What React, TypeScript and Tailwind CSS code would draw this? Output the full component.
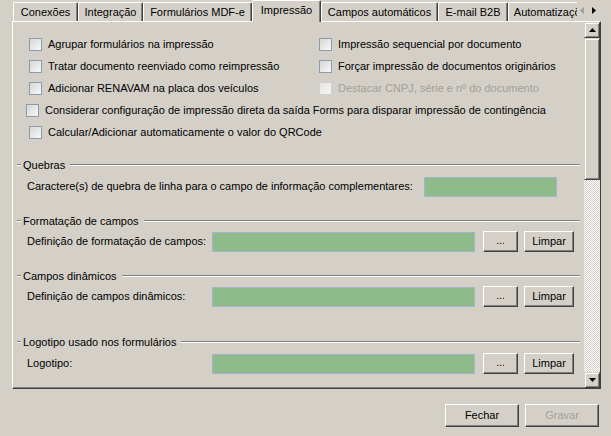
import clsx from "clsx";

type Tab = { label: string; width: string; active?: boolean };

const tabs: Tab[] = [
  { label: "Conexões", width: "w-[65px]" },
  { label: "Integração", width: "w-[65px]" },
  { label: "Formulários MDF-e", width: "w-[109px]" },
  { label: "Impressão", width: "w-[69px]", active: true },
  { label: "Campos automáticos", width: "w-[117px]" },
  { label: "E-mail B2B", width: "w-[70px]" },
  { label: "Automatizações", width: "w-[90px]" },
];

const raised =
  "border border-t-white border-l-white border-r-[#404040] border-b-[#404040] shadow-[inset_-1px_-1px_0_#808080]";

function Checkbox({ disabled }: { disabled?: boolean }) {
  return (
    <span
      className={clsx(
        "h-[13px] w-[13px] shrink-0 border bg-linear-to-br",
        disabled
          ? "border-[#c9cfd8] from-[#e6e5e1] to-[#f6f6f4]"
          : "border-[#8a9bb2] from-[#d6d6d4] to-[#f8f8f8]"
      )}
    />
  );
}

function Option({
  label,
  disabled,
  className,
}: {
  label: string;
  disabled?: boolean;
  className?: string;
}) {
  return (
    <div className={clsx("flex h-[22px] items-center gap-[6px]", className)}>
      <Checkbox disabled={disabled} />
      <span
        className={clsx(
          "whitespace-nowrap",
          disabled ? "text-[#a19f9a]" : "text-black"
        )}
      >
        {label}
      </span>
    </div>
  );
}

function SectionTitle({
  children,
  className,
}: {
  children: string;
  className?: string;
}) {
  return (
    <div className={clsx("flex h-[14px] items-center pl-[4px] pr-[4px]", className)}>
      <span className="h-[2px] w-[4px] border-t border-t-[#808080] border-b border-b-white" />
      <span className="ml-[2px] mr-[5px] whitespace-nowrap">{children}</span>
      <span className="h-[2px] flex-1 border-t border-t-[#808080] border-b border-b-white" />
    </div>
  );
}

function Button({
  children,
  className,
  disabled,
}: {
  children: string;
  className?: string;
  disabled?: boolean;
}) {
  return (
    <button
      className={clsx(
        "flex items-center justify-center bg-[#d4d0c8]",
        raised,
        disabled ? "text-[#a19f9a]" : "text-black",
        className
      )}
    >
      {children}
    </button>
  );
}

function FieldRow({ label, className }: { label: string; className?: string }) {
  return (
    <div className={clsx("flex h-[21px] items-center pl-[14px]", className)}>
      <span className="w-[185px] whitespace-nowrap">{label}</span>
      <span className="h-[20px] w-[263px] border border-[#a3b6c9] bg-[#8fbb8b]" />
      <Button className="ml-[8px] h-[21px] w-[35px] pb-[3px] text-[10px]">...</Button>
      <Button className="ml-[6px] h-[21px] w-[50px]">Limpar</Button>
    </div>
  );
}

function ScrollButton({ up }: { up?: boolean }) {
  return (
    <div className="flex h-[16px] items-center justify-center border border-t-[#d4d0c8] border-l-[#d4d0c8] border-r-[#404040] border-b-[#404040] shadow-[inset_1px_1px_0_#fff,inset_-1px_-1px_0_#808080]">
      <svg width="7" height="4" viewBox="0 0 7 4">
        {up ? (
          <polygon points="3.5,0 7,4 0,4" fill="#000" />
        ) : (
          <polygon points="0,0 7,0 3.5,4" fill="#000" />
        )}
      </svg>
    </div>
  );
}

export default function App() {
  return (
    <main className="h-[436px] w-[611px] overflow-hidden bg-[#d4d0c8] font-['Liberation_Sans',Arial,sans-serif] text-[11px] text-black">
      <div className="flex h-[21px] items-end">
        <div className="ml-[13px] flex h-full w-[564px] items-end overflow-x-clip">
          {tabs.map((tab) => (
            <div
              key={tab.label}
              className={clsx(
                "flex shrink-0 items-center justify-center whitespace-nowrap rounded-t-[2px] border-l border-t border-r border-l-white border-t-white border-r-[#404040] bg-[#d4d0c8] shadow-[inset_-1px_0_0_#808080]",
                tab.active ? "relative z-10 -mb-px h-[22px] pb-[3px]" : "h-[19px]",
                tab.width
              )}
            >
              {tab.label}
            </div>
          ))}
        </div>
        <div className="flex h-full items-center gap-[8px] pl-[3px] pb-[1px]">
          <svg width="4" height="7" viewBox="0 0 4 7">
            <polygon points="4,0 4,7 0,3.5" fill="#a09e98" />
          </svg>
          <svg width="4" height="7" viewBox="0 0 4 7">
            <polygon points="0,0 4,3.5 0,7" fill="#000" />
          </svg>
        </div>
      </div>

      <section className="ml-[12px] flex h-[368px] w-[589px] border-l border-t border-r border-b border-l-white border-t-white border-r-[#404040] border-b-[#404040] shadow-[inset_-1px_-1px_0_#808080]">
        <div className="flex flex-1 flex-col pt-[11px]">
          <div className="grid grid-cols-[306px_1fr]">
            <Option label="Agrupar formulários na impressão" className="pl-[16px]" />
            <Option label="Impressão sequencial por documento" />
            <Option label="Tratar documento reenviado como reimpressão" className="pl-[16px]" />
            <Option label="Forçar impressão de documentos originários" />
            <Option label="Adicionar RENAVAM na placa dos veículos" className="pl-[16px]" />
            <Option label="Destacar CNPJ, série e nº do documento" disabled />
          </div>
          <Option
            label="Considerar configuração de impressão direta da saída Forms para disparar impressão de contingência"
            className="pl-[13px]"
          />
          <Option
            label="Calcular/Adicionar automaticamente o valor do QRCode"
            className="pl-[16px]"
          />

          <SectionTitle className="mt-[15px]">Quebras</SectionTitle>
          <div className="mt-[4px] flex h-[21px] items-center pl-[14px]">
            <span className="w-[397px] whitespace-nowrap">
              Caractere(s) de quebra de linha para o campo de informação complementares:
            </span>
            <span className="h-[20px] w-[133px] border border-[#a3b6c9] bg-[#8fbb8b]" />
          </div>

          <SectionTitle className="mt-[17px]">Formatação de campos</SectionTitle>
          <FieldRow label="Definição de formatação de campos:" className="mt-[3px]" />

          <SectionTitle className="mt-[17px]">Campos dinâmicos</SectionTitle>
          <FieldRow label="Definição de campos dinâmicos:" className="mt-[3px]" />

          <SectionTitle className="mt-[28px]">Logotipo usado nos formulários</SectionTitle>
          <FieldRow label="Logotipo:" className="mt-[4px]" />
        </div>

        <div className="flex w-[16px] flex-col">
          <ScrollButton up />
          <div className="h-[142px] border border-t-[#d4d0c8] border-l-[#d4d0c8] border-r-[#404040] border-b-[#404040] shadow-[inset_1px_1px_0_#fff,inset_-1px_-1px_0_#808080]" />
          <div className="flex-1 bg-[image:repeating-conic-gradient(#ffffff_0%_25%,#d4d0c8_0%_50%)] bg-[length:2px_2px]" />
          <ScrollButton />
        </div>
      </section>

      <div className="mt-[15px] flex justify-end gap-[6px] pr-[12px]">
        <Button className="h-[23px] w-[74px]">Fechar</Button>
        <Button className="h-[23px] w-[74px]" disabled>
          Gravar
        </Button>
      </div>
    </main>
  );
}
